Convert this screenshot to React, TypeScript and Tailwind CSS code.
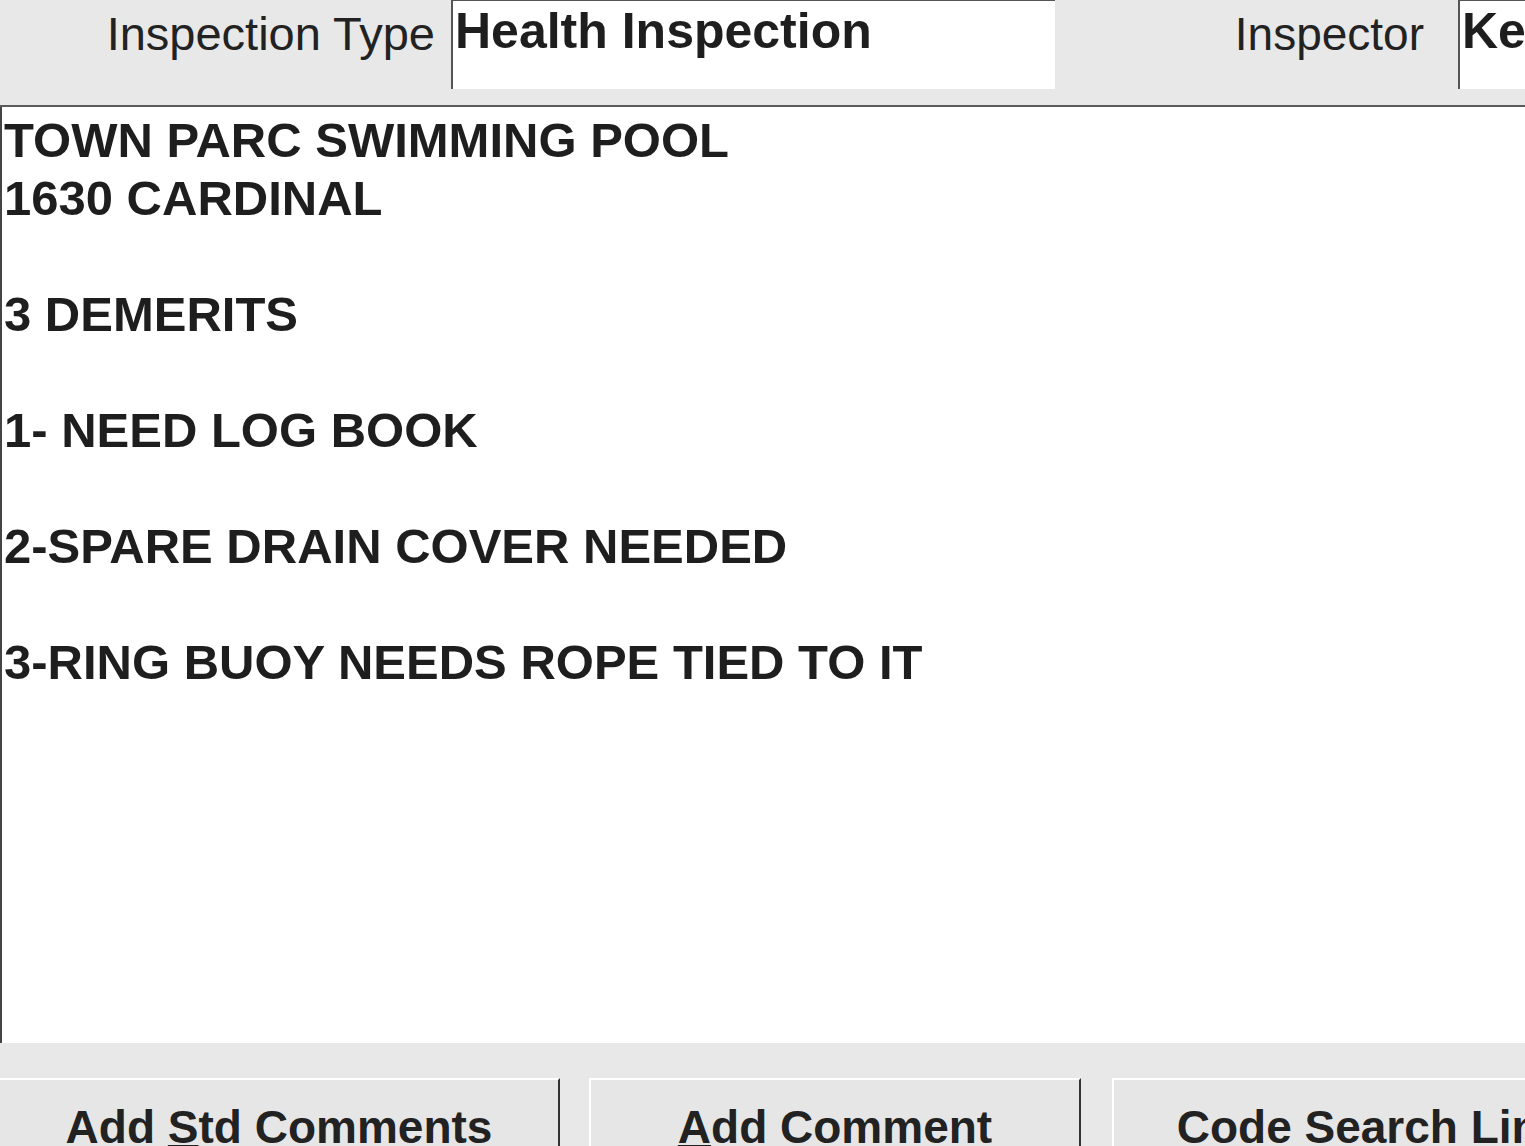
import React from 'react'

const NOTES = `TOWN PARC SWIMMING POOL
1630 CARDINAL

3 DEMERITS

1- NEED LOG BOOK

2-SPARE DRAIN COVER NEEDED

3-RING BUOY NEEDS ROPE TIED TO IT`

export default function App() {
  return (
    <div
      className="w-[1525px] h-[1146px] overflow-hidden flex flex-col bg-[#e8e8e8] text-[#222]"
      style={{ fontFamily: '"Liberation Sans", Arial, sans-serif' }}
    >
      {/* HEADER FIELDS */}
      <div className="h-[107px] shrink-0 flex border-b-2 border-[#5a5a5a]">
        <div className="w-[451px] shrink-0 text-right pr-[16px] pt-[7px] text-[47px] leading-[54px]">
          Inspection Type
        </div>
        <div className="w-[604px] h-[89px] shrink-0 bg-white border-t border-l-2 border-[#555] pl-[2px] pt-[2px] text-[50px] leading-[56px] font-bold text-[#1e1e1e] whitespace-nowrap overflow-hidden">
          Health Inspection
        </div>
        <div className="w-[403px] shrink-0 text-right pr-[34px] pt-[7px] text-[46px] leading-[54px]">
          Inspector
        </div>
        <div className="w-[300px] h-[89px] shrink-0 bg-white border-t border-l-2 border-[#555] pl-[2px] pt-[2px] text-[50px] leading-[56px] font-bold text-[#1e1e1e] whitespace-nowrap overflow-hidden">
          Ke
        </div>
      </div>

      {/* COMMENTS */}
      <div className="h-[936px] shrink-0 bg-white border-l-2 border-[#444] pl-[2px] pt-[4px] text-[49px] leading-[58px] font-bold text-[#1e1e1e] whitespace-pre-line">
        {NOTES}
      </div>

      {/* BUTTONS */}
      <div className="flex-1 flex items-start pt-[35px]">
        <button className="w-[560px] h-[80px] shrink-0 border-t-2 border-t-white border-r-2 border-r-[#333] bg-[#e6e6e6] pt-[16px] text-[46px] leading-[52px] font-bold text-[#222] text-center whitespace-nowrap">
          Add <span className="underline underline-offset-[2px] decoration-[3px]">S</span>td Comments
        </button>
        <button className="ml-[29px] w-[492px] h-[80px] shrink-0 border-t-2 border-l-2 border-t-white border-l-white border-r-2 border-r-[#333] bg-[#e6e6e6] pt-[16px] text-[46px] leading-[52px] font-bold text-[#222] text-center whitespace-nowrap">
          <span className="underline underline-offset-[2px] decoration-[3px]">A</span>dd Comment
        </button>
        <button className="ml-[31px] w-[516px] h-[80px] shrink-0 border-t-2 border-l-2 border-white bg-[#e6e6e6] pt-[16px] text-[46px] leading-[52px] font-bold text-[#222] text-center whitespace-nowrap">
          Code Search Link
        </button>
      </div>
    </div>
  )
}
